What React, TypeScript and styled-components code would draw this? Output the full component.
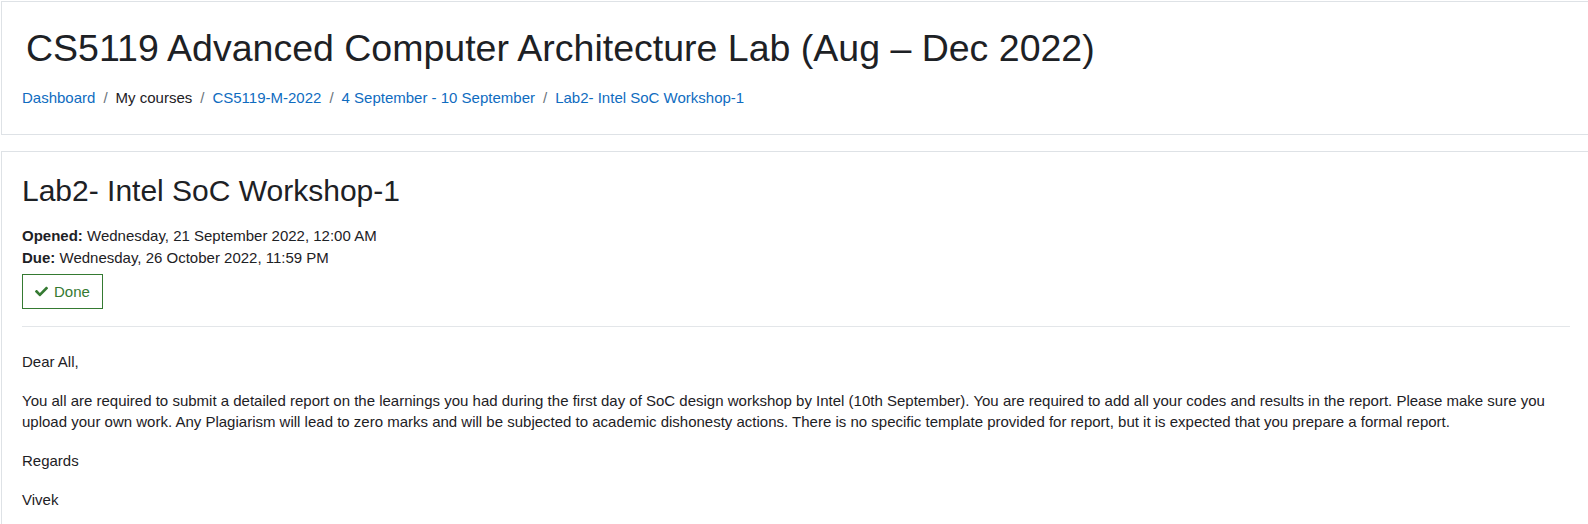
import React from 'react';
import styled, { createGlobalStyle } from 'styled-components';

const GlobalStyle = createGlobalStyle`
  body {
    margin: 0;
    background: #fff;
    overflow: hidden;
    font-family: "Liberation Sans", Arial, sans-serif;
    color: #1d2125;
  }
`;

const Page = styled.div`
  padding: 1px 0 0 1px;
  width: 1590px;
`;

const Card = styled.section<{ $gap?: number }>`
  box-sizing: border-box;
  width: 1590px;
  border: 1px solid #dee2e6;
  background: #fff;
  margin-bottom: ${(p) => p.$gap ?? 0}px;
`;

const HeaderBody = styled.div`
  padding: 23.5px 20px 24.5px 20px;
`;

const MainBody = styled.div`
  padding: 21.3px 20px 0 20px;
`;

const PageTitle = styled.h1`
  margin: 0 0 16.5px 4px;
  font-size: 37.5px;
  font-weight: 400;
  line-height: 45px;
`;

const Crumbs = styled.ol`
  display: flex;
  margin: 0;
  padding: 0;
  list-style: none;
  font-size: 15px;
  line-height: 22.5px;
`;

const Crumb = styled.li<{ $first?: boolean }>`
  display: flex;
  &::before {
    content: ${(p) => (p.$first ? 'none' : '"/"')};
    padding: 0 8px;
    color: #6a737b;
  }
`;

const CrumbLink = styled.a`
  color: #0f6cbf;
  text-decoration: none;
`;

const ActivityTitle = styled.h2`
  margin: 0 0 16px 0;
  font-size: 30px;
  font-weight: 400;
  line-height: 36px;
`;

const Dates = styled.div`
  font-size: 15px;
  line-height: 22px;
`;

const Strong = styled.strong`
  font-weight: 700;
`;

const DoneButton = styled.div`
  display: inline-flex;
  align-items: center;
  gap: 6px;
  box-sizing: border-box;
  height: 35px;
  margin-top: 5px;
  padding: 0 12px;
  border: 1px solid #357a32;
  color: #357a32;
  font-size: 15px;
`;

const Rule = styled.hr`
  margin: 16.7px 0 0 0;
  border: 0;
  border-top: 1px solid #e3e6e9;
`;

const Content = styled.div`
  padding-top: 24.3px;
  font-size: 15px;
  line-height: 21.6px;
`;

const Para = styled.p`
  margin: 0 0 17px 0;
`;

const Check = () => (
  <svg width="13" height="13" viewBox="0 0 512 512" fill="currentColor">
    <path d="M173.898 439.404l-166.4-166.4c-9.997-9.997-9.997-26.206 0-36.204l36.203-36.204c9.997-9.998 26.207-9.998 36.204 0L192 312.69 432.095 72.596c9.997-9.997 26.207-9.997 36.204 0l36.203 36.204c9.997 9.997 9.997 26.206 0 36.204l-294.4 294.401c-9.998 9.997-26.207 9.997-36.204-.001z" />
  </svg>
);

const crumbs = [
  { label: 'Dashboard', link: true },
  { label: 'My courses', link: false },
  { label: 'CS5119-M-2022', link: true },
  { label: '4 September - 10 September', link: true },
  { label: 'Lab2- Intel SoC Workshop-1', link: true },
];

export default function App() {
  return (
    <Page>
      <GlobalStyle />
      <Card $gap={16}>
        <HeaderBody>
          <PageTitle>CS5119 Advanced Computer Architecture Lab (Aug – Dec 2022)</PageTitle>
          <Crumbs>
            {crumbs.map((c, i) => (
              <Crumb key={c.label} $first={i === 0}>
                {c.link ? <CrumbLink href="#">{c.label}</CrumbLink> : <span>{c.label}</span>}
              </Crumb>
            ))}
          </Crumbs>
        </HeaderBody>
      </Card>
      <Card>
        <MainBody>
          <ActivityTitle>Lab2- Intel SoC Workshop-1</ActivityTitle>
          <Dates>
            <div><Strong>Opened:</Strong> Wednesday, 21 September 2022, 12:00 AM</div>
            <div><Strong>Due:</Strong> Wednesday, 26 October 2022, 11:59 PM</div>
          </Dates>
          <DoneButton>
            <Check />
            Done
          </DoneButton>
          <Rule />
          <Content>
            <Para>Dear All,</Para>
            <Para>
              You all are required to submit a detailed report on the learnings you had during the first day of SoC design workshop by Intel (10th September). You are required to add all your codes and results in the report. Please make sure you upload your own work. Any Plagiarism will lead to zero marks and will be subjected to academic dishonesty actions. There is no specific template provided for report, but it is expected that you prepare a formal report.
            </Para>
            <Para>Regards</Para>
            <Para>Vivek</Para>
          </Content>
        </MainBody>
      </Card>
    </Page>
  );
}
